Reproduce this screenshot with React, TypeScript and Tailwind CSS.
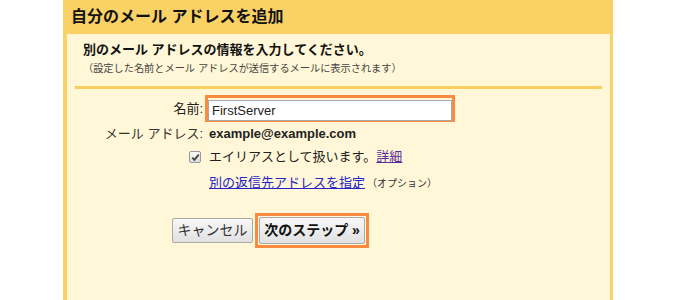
const font = "font-['Liberation_Sans','Noto_Sans_CJK_JP',sans-serif]";

const App = () => {
  return (
    <div className={`w-[676px] h-[300px] bg-white pl-[63px] ${font}`}>
      <div className="w-[550px] h-full bg-[#fad165] pl-[4px] pr-[3px] flex flex-col">
        {/* Header */}
        <div className="h-[34px] flex items-center pl-[4px] pb-[1px]">
          <h1 className="text-[16px] font-bold text-[#111] leading-none">自分のメール アドレスを追加</h1>
        </div>

        {/* Body */}
        <div className="flex-1 bg-[#fff7d7] pt-[7px]">
          <div className="pl-[16px]">
            <p className="text-[13px] font-bold text-[#111] leading-[18px]">別のメール アドレスの情報を入力してください。</p>
            <p className="mt-[3px] text-[10.2px] text-[#444] leading-[14px]">（設定した名前とメール アドレスが送信するメールに表示されます）</p>
          </div>

          <div className="mt-[10px] mx-[8px] h-[3px] bg-[#f8cf5e]" />

          {/* Name */}
          <div className="mt-[6px] flex items-center">
            <label className="w-[136px] text-right text-[13px] text-[#222]">名前:</label>
            <div className="ml-[2px] w-[250px] h-[27px] border-[3px] border-[#f88b3f]">
              <input
                defaultValue="FirstServer"
                className="w-full h-full bg-white border border-[#a8a8a8] px-[3px] text-[13px] text-[#222] outline-none"
              />
            </div>
          </div>

          {/* Email */}
          <div className="mt-[3px] flex items-center h-[18px]">
            <span className="w-[136px] text-right text-[13px] text-[#333]">メール アドレス:</span>
            <span className="ml-[6px] text-[13px] font-bold text-[#222]">example@example.com</span>
          </div>

          {/* Alias */}
          <div className="mt-[4px] flex items-center h-[20px]">
            <div className="w-[136px] flex justify-end pr-[2px]">
              <div className="w-[12px] h-[12px] rounded-[2px] border border-[#9a9a9a] bg-gradient-to-b from-[#fcfcfc] to-[#dcdcdc] flex items-center justify-center">
                <svg width="9" height="9" viewBox="0 0 9 9">
                  <path d="M1.2 4.6 L3.4 6.8 L7.8 1.6" fill="none" stroke="#444" strokeWidth="1.8" />
                </svg>
              </div>
            </div>
            <span className="ml-[6px] text-[13px] text-[#222]">
              エイリアスとして扱います。
              <a href="#" className="text-[#5a2d9c] underline">詳細</a>
            </span>
          </div>

          {/* Reply-to */}
          <div className="mt-[6px] flex items-center h-[20px] pl-[142px]">
            <a href="#" className="text-[13px] text-[#2323c8] underline">別の返信先アドレスを指定</a>
            <span className="ml-[2px] text-[10px] text-[#333]">（オプション）</span>
          </div>

          {/* Buttons */}
          <div className="mt-[20px] flex items-center pl-[105px] gap-[2px]">
            <button className="w-[81px] h-[25px] rounded-[2px] border border-[#a9a9a9] bg-gradient-to-b from-[#f8f8f8] to-[#e1e1e1] text-[14px] text-[#333]">
              キャンセル
            </button>
            <div className="border-[3px] border-[#f88b3f] p-[1px]">
              <button className="w-[106px] h-[27px] rounded-[2px] border border-[#a9a9a9] bg-gradient-to-b from-[#f8f8f8] to-[#e1e1e1] text-[14px] font-bold text-[#111]">
                次のステップ »
              </button>
            </div>
          </div>
        </div>
      </div>
    </div>
  );
};

export default App;
